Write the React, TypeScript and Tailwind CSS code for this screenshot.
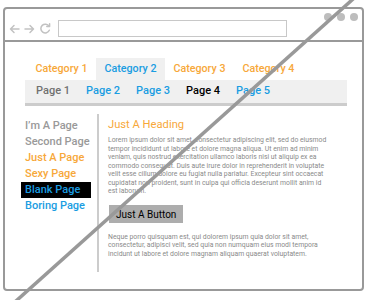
import React from 'react';

const ORANGE = 'text-[#f7a83a]';
const BLUE = 'text-[#1a9de2]';

const categories = [
  { label: 'Category 1', active: false },
  { label: 'Category 2', active: true },
  { label: 'Category 3', active: false },
  { label: 'Category 4', active: false },
];

const pages = [
  { label: 'Page 1', cls: 'text-[#707070]' },
  { label: 'Page 2', cls: BLUE },
  { label: 'Page 3', cls: BLUE },
  { label: 'Page 4', cls: 'text-black font-bold' },
  { label: 'Page 5', cls: BLUE },
];

const sideLinks = [
  { label: 'I\u2019m A Page', cls: 'text-[#999999]' },
  { label: 'Second Page', cls: 'text-[#999999]' },
  { label: 'Just A Page', cls: ORANGE },
  { label: 'Sexy Page', cls: ORANGE },
  { label: 'Blank Page', cls: `${BLUE} bg-black` },
  { label: 'Boring Page', cls: BLUE },
];

const loremLines = [
  'Lorem ipsum dolor sit amet, consectetur adipiscing elit, sed do eiusmod',
  'tempor incididunt ut labore et dolore magna aliqua. Ut enim ad minim',
  'veniam, quis nostrud exercitation ullamco laboris nisi ut aliquip ex ea',
  'commodo consequat. Duis aute irure dolor in reprehenderit in voluptate',
  'velit esse cillum dolore eu fugiat nulla pariatur. Excepteur sint occaecat',
  'cupidatat non proident, sunt in culpa qui officia deserunt mollit anim id',
  'est laborum.',
];

const nequeLines = [
  'Neque porro quisquam est, qui dolorem ipsum quia dolor sit amet,',
  'consectetur, adipisci velit, sed quia non numquam eius modi tempora',
  'incidunt ut labore et dolore magnam aliquam quaerat voluptatem.',
];

const ArrowIcon = ({ flip }: { flip?: boolean }) => (
  <svg width="11" height="10" viewBox="0 0 11 10" className={flip ? 'scale-x-[-1]' : ''}>
    <path d="M10 5H1.5M5 1.5L1.5 5 5 8.5" fill="none" stroke="#c2c2c2" strokeWidth="1.5" strokeLinecap="round" strokeLinejoin="round" />
  </svg>
);

const RefreshIcon = () => (
  <svg width="12" height="11" viewBox="0 0 12 11">
    <path d="M10 3.2A4.4 4.4 0 1 0 10.3 7.3" fill="none" stroke="#c2c2c2" strokeWidth="1.5" strokeLinecap="round" />
    <path d="M10.6 0.8V3.6H7.8" fill="none" stroke="#c2c2c2" strokeWidth="1.5" strokeLinecap="round" strokeLinejoin="round" />
  </svg>
);

export default function App() {
  return (
    <div className="relative w-[370px] h-[300px] overflow-hidden bg-white pt-[7px] pl-[3px] font-['Roboto',sans-serif]">
      {/* Browser frame */}
      <div className="w-[361px] h-[284px] border-2 border-[#999999] rounded-[4px] flex flex-col">
        {/* Toolbar */}
        <div className="h-[33px] border-b-2 border-[#999999] flex items-end pb-[3px] pl-[4px] pr-[4px]">
          <div className="flex items-center gap-[4px] h-[17px]">
            <ArrowIcon />
            <ArrowIcon flip />
            <RefreshIcon />
          </div>
          <div className="ml-[7px] w-[229px] h-[17px] border border-[#c8c8c8]" />
          <div className="ml-auto self-start mt-[4px] flex gap-[5px]">
            <div className="w-[8px] h-[8px] rounded-full bg-[#bdbdbd]" />
            <div className="w-[8px] h-[8px] rounded-full bg-[#bdbdbd]" />
            <div className="w-[8px] h-[8px] rounded-full bg-[#bdbdbd]" />
          </div>
        </div>

        {/* Page */}
        <div className="pl-[20px] pr-[15px] pt-[16px]">
          {/* Category tabs */}
          <div className="flex pl-[2px]">
            {categories.map((c) => (
              <div
                key={c.label}
                className={`h-[22px] px-[8.5px] flex items-center text-[10.7px] font-medium ${c.active ? `bg-[#f0f0f0] ${BLUE}` : ORANGE}`}
              >
                {c.label}
              </div>
            ))}
          </div>

          {/* Page bar */}
          <div className="h-[26px] bg-[#f0f0f0] border-b-[3px] border-[#cccccc] flex items-center gap-[16px] pl-[11px]">
            {pages.map((p) => (
              <span key={p.label} className={`text-[11px] font-medium ${p.cls}`}>
                {p.label}
              </span>
            ))}
          </div>

          {/* Body */}
          <div className="flex mt-[8px]">
            <ul className="w-[70px] -ml-[4px] pt-[4px] flex flex-col">
              {sideLinks.map((l) => (
                <li key={l.label} className={`h-[16px] leading-[16px] px-[4px] text-[11px] font-medium whitespace-nowrap ${l.cls}`}>
                  {l.label}
                </li>
              ))}
            </ul>
            <div className="ml-[6px] w-[2px] h-[158px] bg-[#cccccc]" />
            <div className="pl-[9px] pt-[3px]">
              <h2 className={`text-[11.2px] leading-[16px] ${ORANGE}`}>Just A Heading</h2>
              <p className="mt-[3px] text-[6.85px] leading-[8.5px] text-[#8a8a8a] whitespace-nowrap">
                {loremLines.map((line) => (
                  <span key={line} className="block">{line}</span>
                ))}
              </p>
              <button className="mt-[9.5px] ml-[1px] h-[18px] px-[7px] bg-[#adadad] text-[10px] text-black">
                Just A Button
              </button>
              <p className="mt-[8px] text-[6.85px] leading-[8.5px] text-[#8a8a8a] whitespace-nowrap">
                {nequeLines.map((line) => (
                  <span key={line} className="block">{line}</span>
                ))}
              </p>
            </div>
          </div>
        </div>
      </div>

      {/* Diagonal strike over the wireframe */}
      <svg className="absolute inset-0 pointer-events-none" width="370" height="300">
        <line x1="355.3" y1="-3" x2="13.8" y2="303" stroke="#999999" strokeWidth="3.5" />
      </svg>
    </div>
  );
}
